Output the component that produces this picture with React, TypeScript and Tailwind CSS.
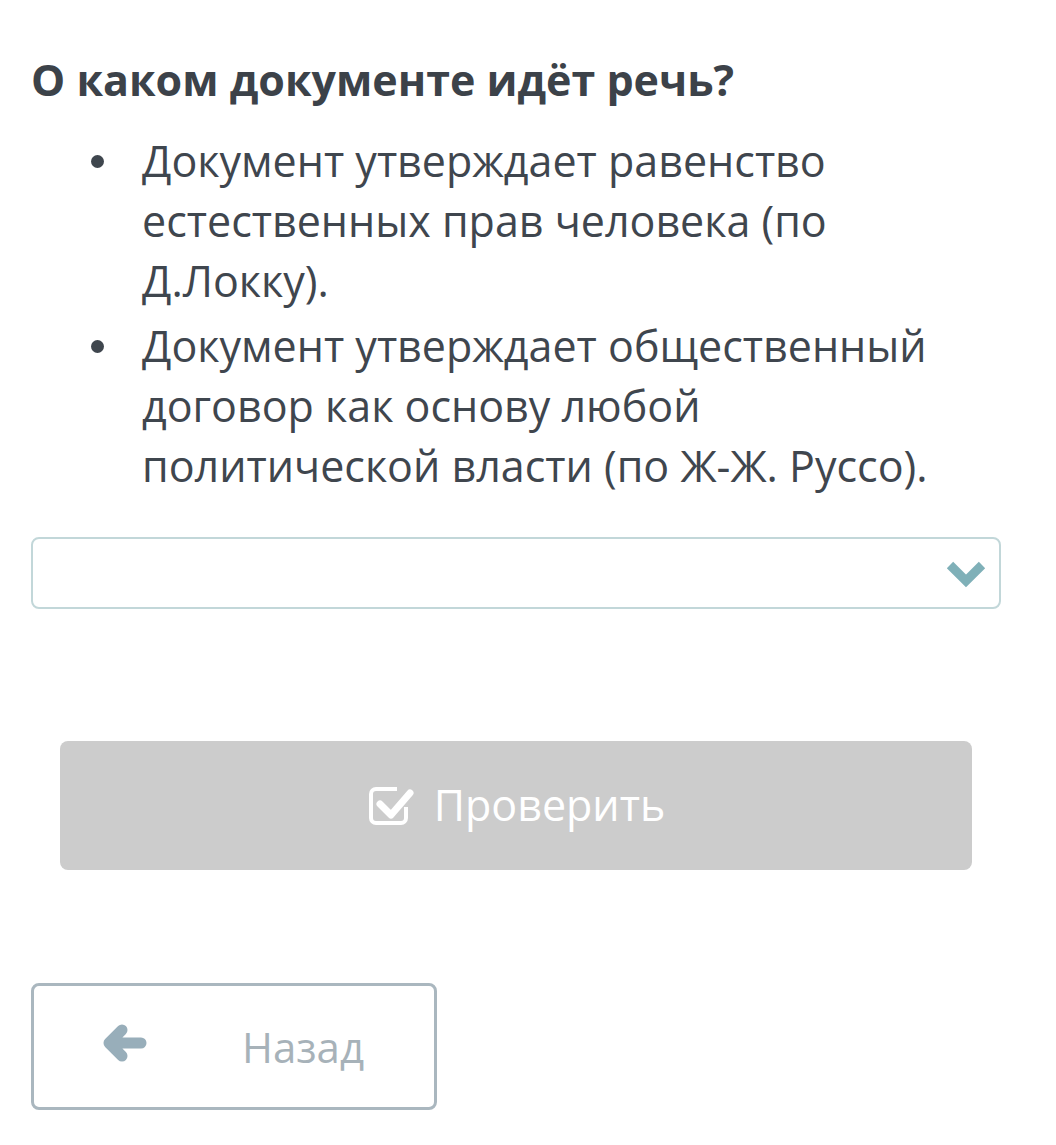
import React from 'react';

const items: string[] = [
  'Документ утверждает равенство естественных прав человека (по Д.Локку).',
  'Документ утверждает общественный договор как основу любой политической власти (по Ж-Ж. Руссо).',
];

// check-square-o like icon
const CheckSquareIcon = () => (
  <svg width="48" height="42" viewBox="0 0 48 42" fill="none">
    <path
      d="M30 4 H9 a5 5 0 0 0 -5 5 v24 a5 5 0 0 0 5 5 h25 a5 5 0 0 0 5 -5 v-11"
      stroke="white"
      strokeWidth="4"
      strokeLinejoin="round"
    />
    <path
      d="M13 19 l11 11 l19 -22"
      stroke="white"
      strokeWidth="7"
      strokeLinecap="round"
      strokeLinejoin="round"
    />
  </svg>
);

const ArrowLeftIcon = () => (
  <svg width="48" height="40" viewBox="0 0 48 40" fill="none" className="-mt-[8px]">
    <path
      d="M39 20 H10 M20 7 L7 20 L20 33"
      stroke="#98aeba"
      strokeWidth="11"
      strokeLinecap="round"
      strokeLinejoin="round"
    />
  </svg>
);

export default function App() {
  return (
    <div className="min-h-screen bg-white pl-[31px] pr-[55px] pt-[55px] font-['Open_Sans',sans-serif]">
      <h2 className="text-[43px] leading-[50px] font-bold text-[#3c4249]">
        О каком документе идёт речь?
      </h2>

      <ul className="mt-[26px] flex flex-col gap-[5px]">
        {items.map((text) => (
          <li key={text} className="flex text-[43px] leading-[60px] text-[#3f464e]">
            <span className="flex w-[111px] shrink-0 justify-end pr-[38px] pt-[24px]">
              <span className="block h-[13px] w-[13px] rounded-full bg-[#3f464e]" />
            </span>
            <span className="max-w-[815px]">{text}</span>
          </li>
        ))}
      </ul>

      <div className="mt-[41px] flex h-[72px] items-center justify-end rounded-lg border-2 border-[#c2d7d9] pr-[12px]">
        <svg width="42" height="32" viewBox="0 0 42 32" fill="none">
          <path
            d="M5 8 L21 24 L37 8"
            stroke="#7fb0b8"
            strokeWidth="9"
            strokeLinejoin="miter"
          />
        </svg>
      </div>

      <div className="mt-[132px] px-[29px]">
        <button
          type="button"
          className="flex h-[129px] w-full items-center justify-center gap-[19px] rounded-lg bg-[#cccccc] text-[43px] text-white"
        >
          <CheckSquareIcon />
          <span>Проверить</span>
        </button>
      </div>

      <button
        type="button"
        className="mt-[113px] flex h-[127px] w-[406px] items-center rounded-lg border-[3px] border-[#aab7bf] pl-[68px]"
      >
        <ArrowLeftIcon />
        <span className="ml-[92px] text-[42px] text-[#a7b2b9]">Назад</span>
      </button>
    </div>
  );
}
